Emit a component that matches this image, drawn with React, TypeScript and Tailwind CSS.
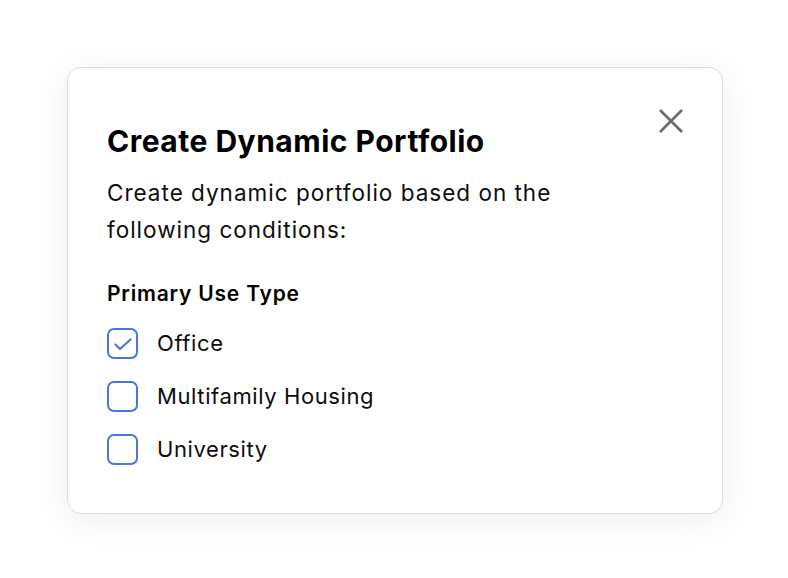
import React, { useState } from 'react';

const options = ['Office', 'Multifamily Housing', 'University'];

export default function App() {
  const [checked, setChecked] = useState<string[]>(['Office']);

  const toggle = (o: string) =>
    setChecked((c) => (c.includes(o) ? c.filter((x) => x !== o) : [...c, o]));

  return (
    <div className="w-[788px] h-[578px] bg-white pt-[67px] pl-[67px]" style={{ fontFamily: 'Inter, "Open Sans", sans-serif' }}>
      <div className="relative w-[656px] h-[447px] bg-white border border-[#dcdce2] rounded-[14px] shadow-[0_6px_36px_rgba(0,0,0,0.07)] pl-[39px] pt-[53px]">
        <button className="absolute right-[38px] top-[40px] text-[#6b6b6b]">
          <svg width="26" height="26" viewBox="0 0 26 26" fill="none" stroke="currentColor" strokeWidth="2.6">
            <path d="M2 2 L24 24 M24 2 L2 24" />
          </svg>
        </button>
        <h1 className="text-[30px] font-bold text-black leading-[40px] tracking-[0.5px]">Create Dynamic Portfolio</h1>
        <p className="mt-[13px] text-[22.5px] leading-[37px] text-[#0d0d0d] w-[480px] tracking-[1px]">
          Create dynamic portfolio based on the following conditions:
        </p>
        <h2 className="mt-[32px] text-[21px] font-semibold text-black leading-[28px] tracking-[0.8px]">Primary Use Type</h2>
        <div className="mt-[20px] flex flex-col gap-[22px]">
          {options.map((o) => (
            <label key={o} className="flex items-center gap-[19px] cursor-pointer" onClick={() => toggle(o)}>
              <span className="w-[31px] h-[31px] rounded-[7px] border-2 border-[#4a78d8] flex items-center justify-center">
                {checked.includes(o) && (
                  <svg width="18" height="13" viewBox="0 0 18 13" fill="none" stroke="#4a78d8" strokeWidth="2.2" strokeLinecap="round" strokeLinejoin="round" className="mt-[2px]">
                    <path d="M1.5 6.5 L6 11 L16.5 1.5" />
                  </svg>
                )}
              </span>
              <span className="text-[22px] text-[#0d0d0d] leading-[31px] tracking-[0.6px]">{o}</span>
            </label>
          ))}
        </div>
      </div>
    </div>
  );
}
